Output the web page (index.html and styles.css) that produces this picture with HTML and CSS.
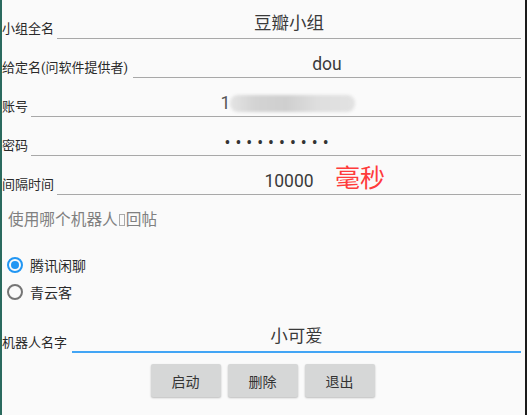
FILE: index.html
```html
<!DOCTYPE html>
<html lang="zh">
<head>
  <meta charset="UTF-8" />
  <meta name="viewport" content="width=device-width, initial-scale=1.0" />
  <title>豆瓣小组</title>
  <link rel="stylesheet" href="styles.css">
</head>
<body>
  <div class="screen">
    <div class="row">
      <span class="label">小组全名</span>
      <div class="field">豆瓣小组</div>
    </div>
    <div class="row">
      <span class="label label-wide">给定名(问软件提供者)</span>
      <div class="field field-latin">dou</div>
    </div>
    <div class="row">
      <span class="label">账号</span>
      <div class="field field-account"><span class="first">1</span><span class="blurred"></span></div>
    </div>
    <div class="row">
      <span class="label">密码</span>
      <div class="field field-pass">••••••••••</div>
    </div>
    <div class="row">
      <span class="label">间隔时间</span>
      <div class="field field-latin">10000<span class="unit">毫秒</span></div>
    </div>

    <p class="hint">使用哪个机器人<span class="tofu"></span>回帖</p>

    <div class="radios">
      <label class="radio"><span class="dot checked"></span>腾讯闲聊</label>
      <label class="radio"><span class="dot"></span>青云客</label>
    </div>

    <div class="row row-name">
      <span class="label label-name">机器人名字</span>
      <div class="field field-focus">小可爱</div>
    </div>

    <div class="buttons">
      <button class="btn">启动</button>
      <button class="btn">删除</button>
      <button class="btn">退出</button>
    </div>
  </div>
</body>
</html>
```

FILE: styles.css
```css
* { box-sizing: border-box; margin: 0; padding: 0; }
body { background: #fafafa; font-family: Roboto, "Noto Sans CJK SC", sans-serif; color: #2b2b2b; }
.screen {
  height: 415px;
  background: #fafafa;
  border-left: 2px solid #2a6a5e;
  border-right: 2px solid #1b1b1b;
  padding-right: 4px;
}
.row { display: flex; align-items: flex-end; height: 39px; }
.label { font-size: 13px; line-height: 16px; padding-bottom: 2px; margin-right: 3px; white-space: nowrap; color: #2a2a2a; }
.label-wide { margin-right: 5px; }
.label-name { margin-right: 5px; }
.field {
  flex: 1;
  position: relative;
  display: flex;
  justify-content: center;
  align-items: flex-end;
  border-bottom: 1px solid #a8a8a8;
  font-size: 17.5px;
  line-height: 20px;
  padding-bottom: 5px;
  color: #3a3a3a;
}
.field-latin { padding-bottom: 3px; }
.field-account { padding-left: 24px; padding-bottom: 3px; }
.first { font-size: 17.5px; color: #555; }
.blurred {
  display: inline-block;
  width: 125px;
  height: 17px;
  margin-bottom: 1px;
  background: linear-gradient(90deg, #e4e4e4 0%, #d3d3d3 20%, #cfcfcf 45%, #dedede 70%, #e2e2e2 100%);
  filter: blur(1.5px);
  border-radius: 8px;
}
.field-pass { letter-spacing: 5px; padding-bottom: 2px; padding-left: 6px; color: #333; }
.unit {
  position: absolute;
  left: 278px;
  bottom: 0;
  font-size: 25px;
  line-height: 30px;
  color: #ff3b3b;
}
.field-focus { border-bottom: 2px solid #42a5f5; padding-bottom: 5px; }
.hint { margin-top: 15px; padding-left: 6px; font-size: 15.7px; line-height: 20px; color: #808080; }
.tofu { display: inline-block; width: 6px; height: 12px; border: 1px solid #aaa; margin: 0 1px; vertical-align: -1px; }
.radios { margin-top: 21px; }
.radio { display: flex; align-items: center; height: 27px; font-size: 14px; color: #2a2a2a; }
.dot {
  width: 16px;
  height: 16px;
  margin: 0 7px 0 5px;
  border: 2px solid #757575;
  border-radius: 50%;
  display: flex;
  align-items: center;
  justify-content: center;
}
.dot.checked { border-color: #2196f3; }
.dot.checked::after { content: ""; width: 8px; height: 8px; border-radius: 50%; background: #2196f3; }
.row-name { margin-top: 9px; }
.buttons { display: flex; justify-content: center; gap: 7px; margin-top: 11px; padding-left: 2px; }
.btn {
  width: 70px;
  height: 33px;
  border: none;
  border-radius: 2px;
  background: #d6d7d7;
  box-shadow: 0 1px 2px rgba(0,0,0,0.25);
  font-family: Roboto, "Noto Sans CJK SC", sans-serif;
  font-size: 14px;
  color: #333;
}
```
